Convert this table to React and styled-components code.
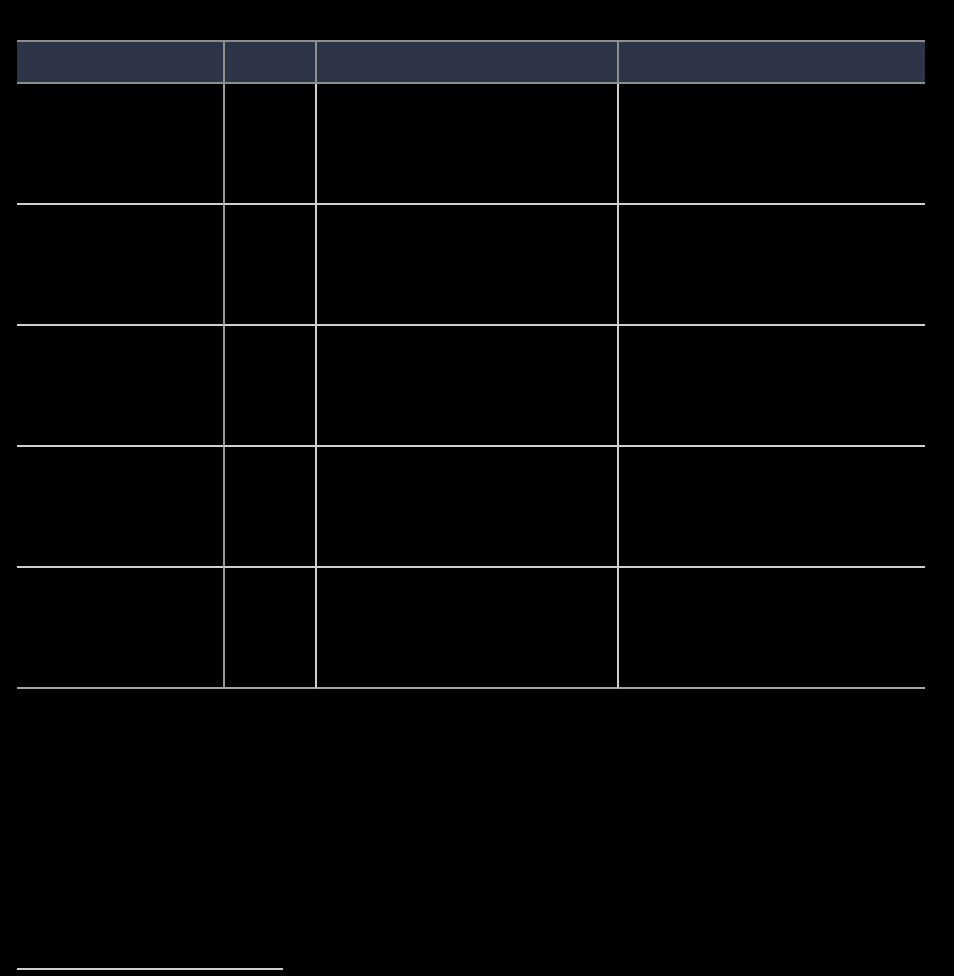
import React from 'react'
import styled, { createGlobalStyle } from 'styled-components'

const GlobalStyle = createGlobalStyle`
  html, body {
    margin: 0;
    padding: 0;
    background: #000;
  }
  body {
    font-family: "Liberation Sans", Arial, sans-serif;
    color: #000;
  }
`

const Page = styled.div`
  background: #000;
  min-height: 976px;
  padding: 40px 29px 0 17px;
  box-sizing: border-box;
`

const Table = styled.table`
  width: 908px;
  border-collapse: separate;
  border-spacing: 0;
  table-layout: fixed;
`

const HeadCell = styled.th`
  height: 40px;
  padding: 0;
  background: #2e3447;
  border-top: 2px solid #8e8e8e;
  border-bottom: 2px solid #8e8e8e;
  border-left: ${({ first }) => (first ? 'none' : '2px solid #8e8e8e')};
`

const Cell = styled.td`
  height: 119px;
  padding: 0;
  border-bottom: 2px solid ${({ last }) => (last ? '#a6a6a6' : '#cfcfcf')};
  border-left: ${({ first, tone }) =>
    first ? 'none' : `2px solid ${tone || '#cfcfcf'}`};
`

const Footnotes = styled.div`
  margin-top: 279px;
`

const FootRule = styled.hr`
  width: 266px;
  height: 2px;
  margin: 0;
  border: none;
  background: #cfcfcf;
`

const columns = [206, 92, 302, 308]
const tones = [null, '#9a9a9a', '#cfcfcf', '#cfcfcf']
const rows = [0, 1, 2, 3, 4]

const App = () => {
  return (
    <>
      <GlobalStyle />
      <Page>
        <Table>
          <colgroup>
            {columns.map((w, i) => (
              <col key={i} style={{ width: w }} />
            ))}
          </colgroup>
          <thead>
            <tr>
              {columns.map((_, i) => (
                <HeadCell key={i} first={i === 0} />
              ))}
            </tr>
          </thead>
          <tbody>
            {rows.map((r) => (
              <tr key={r}>
                {columns.map((_, i) => (
                  <Cell
                    key={i}
                    first={i === 0}
                    tone={tones[i]}
                    last={r === rows.length - 1}
                  />
                ))}
              </tr>
            ))}
          </tbody>
        </Table>
        <Footnotes>
          <FootRule />
        </Footnotes>
      </Page>
    </>
  )
}

export default App
